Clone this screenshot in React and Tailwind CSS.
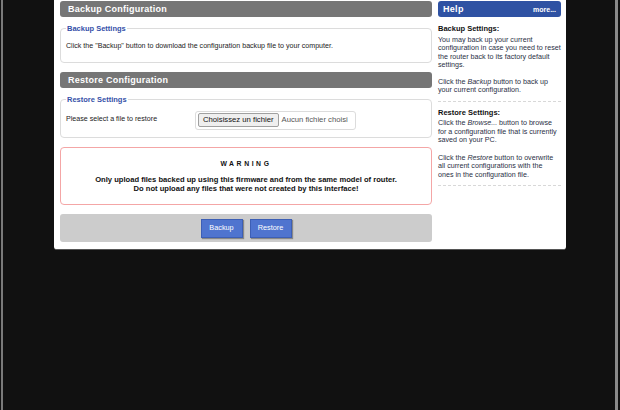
const font = "font-['Liberation_Sans',Arial,sans-serif]";

function SectionHeader({ title }) {
  return (
    <div className="h-[16px] rounded-[3px] bg-[#767676] pl-[8px] flex items-center">
      <span className="text-[9px] font-bold text-white tracking-[0.25px] leading-none">{title}</span>
    </div>
  );
}

function Fieldset({ legend, children, className = "" }) {
  return (
    <fieldset className={"rounded-[4px] border border-[#dcdcdc] px-[5px] " + className}>
      <legend className="px-[1px] text-[7.5px] font-bold text-[#3450a8] leading-none">{legend}</legend>
      {children}
    </fieldset>
  );
}

export default function App() {
  return (
    <div className={"relative w-[620px] h-[410px] bg-[#111111] overflow-hidden " + font}>
      {/* window frame edges */}
      <div className="absolute left-[1px] top-0 bottom-0 w-[2px] bg-[#7a7a7a]" />
      <div className="absolute left-[615px] top-0 bottom-0 w-[3px] bg-[#8a8a8a]" />

      <div className="ml-[54px] w-[512px] bg-white rounded-b-[3px] border-b border-[#555] pl-[6px] pr-[5px] pt-[1px] pb-[7px] flex gap-[6px]">
        {/* main column */}
        <div className="w-[372px] flex flex-col">
          <SectionHeader title="Backup Configuration" />
          <Fieldset legend="Backup Settings" className="mt-[8px] h-[38px]">
            <p className="text-[7.1px] text-[#222] leading-none pt-[10px]">
              Click the "Backup" button to download the configuration backup file to your computer.
            </p>
          </Fieldset>

          <div className="mt-[9px]">
            <SectionHeader title="Restore Configuration" />
          </div>
          <Fieldset legend="Restore Settings" className="mt-[8px] h-[42px]">
            <div className="flex items-center pt-[7px]">
              <span className="w-[129px] text-[7.1px] text-[#222] leading-none">Please select a file to restore</span>
              <div className="w-[161px] h-[19px] rounded-[3px] border border-[#dcdcdc] flex items-center pl-[2px] overflow-hidden whitespace-nowrap">
                <span className="h-[14px] px-[4px] flex items-center border border-[#a0a0a0] bg-[#efefef] rounded-[2px] text-[7.7px] text-[#111]">
                  Choisissez un fichier
                </span>
                <span className="ml-[3px] text-[7.7px] text-[#555]">Aucun fichier choisi</span>
              </div>
            </div>
          </Fieldset>

          <div className="mt-[9px] h-[58px] rounded-[4px] border border-[#f4a6a6] flex flex-col items-center pt-[13px]">
            <div className="text-[6.8px] font-bold text-[#111] tracking-[2.6px] leading-none">WARNING</div>
            <div className="mt-[7px] text-[7.6px] font-bold text-[#111] text-center leading-[9px]">
              Only upload files backed up using this firmware and from the same model of router.
              <br />
              Do not upload any files that were not created by this interface!
            </div>
          </div>

          <div className="mt-[9px] h-[28px] rounded-[3px] bg-[#cccccc] flex items-center justify-center gap-[7px]">
            <button className="w-[42px] h-[19px] bg-[#4f74cf] border border-[#3d5fb5] text-white text-[7.3px] leading-none shadow-[1px_1px_1px_#888]">
              Backup
            </button>
            <button className="w-[42px] h-[19px] bg-[#4f74cf] border border-[#3d5fb5] text-white text-[7.3px] leading-none shadow-[1px_1px_1px_#888]">
              Restore
            </button>
          </div>
        </div>

        {/* help column */}
        <div className="w-[123px] flex flex-col text-[#2a2f45]">
          <div className="h-[16px] rounded-[3px] bg-[#2f52a3] px-[5px] flex items-center justify-between">
            <span className="text-[9px] font-bold text-white leading-none tracking-[0.3px]">Help</span>
            <span className="text-[7px] font-bold text-white leading-none">more...</span>
          </div>
          <div className="pt-[8px] text-[7.15px] leading-[8.5px]">
            <div className="font-bold text-[#111] text-[7.5px]">Backup Settings:</div>
            <p className="mt-[2px]">
              You may back up your current configuration in case you need to reset the router back to its factory default settings.
            </p>
            <p className="mt-[8px]">
              Click the <i>Backup</i> button to back up your current configuration.
            </p>
            <div className="mt-[6px] border-t border-dashed border-[#d8d8d8]" />
            <div className="mt-[7px] font-bold text-[#111] text-[7.5px]">Restore Settings:</div>
            <p className="mt-[2px]">
              Click the <i>Browse...</i> button to browse for a configuration file that is currently saved on your PC.
            </p>
            <p className="mt-[9px] pr-[4px]">
              Click the <i>Restore</i> button to overwrite all current configurations with the ones in the configuration file.
            </p>
            <div className="mt-[6px] border-t border-dashed border-[#d8d8d8]" />
          </div>
        </div>
      </div>
    </div>
  );
}
